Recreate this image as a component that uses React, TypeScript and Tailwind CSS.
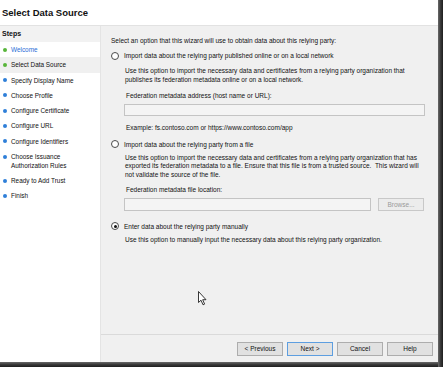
import React from "react"

const steps: { label: string[]; done?: boolean; link?: boolean; active?: boolean }[] = [
  { label: ["Welcome"], done: true, link: true },
  { label: ["Select Data Source"], done: true, active: true },
  { label: ["Specify Display Name"] },
  { label: ["Choose Profile"] },
  { label: ["Configure Certificate"] },
  { label: ["Configure URL"] },
  { label: ["Configure Identifiers"] },
  { label: ["Choose Issuance", "Authorization Rules"] },
  { label: ["Ready to Add Trust"] },
  { label: ["Finish"] },
]

function Radio({ checked }: { checked?: boolean }) {
  return (
    <span className="w-[8px] h-[8px] rounded-full border border-[#4a4a4a] bg-white flex items-center justify-center shrink-0">
      {checked && <span className="w-[3px] h-[3px] rounded-full bg-[#111]" />}
    </span>
  )
}

function Button({ children, primary }: { children: React.ReactNode; primary?: boolean }) {
  return (
    <div
      className={
        "w-[46px] h-[14px] flex items-center justify-center bg-[#e1e1e1] border text-[6.5px] text-[#111] " +
        (primary ? "border-[#5d9ee0]" : "border-[#adadad]")
      }
    >
      {children}
    </div>
  )
}

export default function App() {
  return (
    <div className="w-[443px] h-[367px] flex font-['Liberation_Sans',Arial,sans-serif] overflow-hidden">
      <div className="w-[438px] flex flex-col">
        {/* dialog */}
        <div className="h-[362px] flex flex-col bg-white relative">
          <div className="h-[26px] border-b border-[#e2e2e2] pl-[2px] pt-[8px]">
            <p className="text-[9.5px] leading-[10px] font-bold text-[#111]">Select Data Source</p>
          </div>

          <div className="flex flex-1">
            {/* steps sidebar */}
            <div className="w-[101px] border-r border-[#e4e4e4] bg-white">
              <div className="h-[16px] bg-[#f2f2f2] pl-[2px] flex items-center">
                <span className="text-[7px] font-bold text-[#111]">Steps</span>
              </div>
              {steps.map((s) => (
                <div
                  key={s.label[0]}
                  className={
                    "flex items-start pl-[3px] " +
                    (s.label.length > 1 ? "h-[24px] pt-[3px]" : "h-[15.3px] pt-[3px]") +
                    (s.active ? " bg-[#f0f0f0]" : "")
                  }
                >
                  <span
                    className={
                      "w-[4px] h-[4px] rounded-full mt-[2.5px] shrink-0 " +
                      (s.done ? "bg-[#58b53a]" : "bg-[#2f7fd8]")
                    }
                  />
                  <div className={"ml-[4px] text-[6.4px] leading-[9px] " + (s.link ? "text-[#2a6fd6]" : "text-[#111]")}>
                    {s.label.map((l) => (
                      <div key={l}>{l}</div>
                    ))}
                  </div>
                </div>
              ))}
            </div>

            {/* main panel */}
            <div className="flex-1 bg-[#f0f0f0] flex flex-col">
              <div className="flex-1 pl-[10px] pt-[10px] text-[6.5px] leading-[9px] text-[#111] whitespace-nowrap">
                <p>Select an option that this wizard will use to obtain data about this relying party:</p>

                <div className="mt-[6px] flex items-center gap-[5px] h-[9px]">
                  <Radio />
                  <span>Import data about the relying party published online or on a local network</span>
                </div>
                <div className="mt-[7px] pl-[14px] leading-[8.5px]">
                  <p>Use this option to import the necessary data and certificates from a relying party organization that</p>
                  <p>publishes its federation metadata online or on a local network.</p>
                </div>
                <div className="pl-[15px]">
                  <p className="mt-[7px]">Federation metadata address (host name or URL):</p>
                  <div className="mt-[4px] w-[301px] h-[12px] border border-[#c4c4c4] bg-[#f4f4f4] -ml-[2px]" />
                  <p className="mt-[6.5px]">Example: fs.contoso.com or https://www.contoso.com/app</p>
                </div>

                <div className="mt-[8px] flex items-center gap-[5px] h-[9px]">
                  <Radio />
                  <span>Import data about the relying party from a file</span>
                </div>
                <div className="mt-[5px] pl-[14px] leading-[8.5px]">
                  <p>Use this option to import the necessary data and certificates from a relying party organization that has</p>
                  <p>exported its federation metadata to a file. Ensure that this file is from a trusted source.&nbsp; This wizard will</p>
                  <p>not validate the source of the file.</p>
                </div>
                <div className="pl-[15px]">
                  <p className="mt-[6px]">Federation metadata file location:</p>
                  <div className="mt-[3.5px] flex gap-[7px] -ml-[2px]">
                    <div className="w-[247px] h-[13.5px] border border-[#c4c4c4] bg-[#f4f4f4]" />
                    <div className="w-[46px] h-[13.5px] border border-[#c8c8c8] bg-[#ececec] flex items-center justify-center text-[#9a9a9a]">
                      Browse...
                    </div>
                  </div>
                </div>

                <div className="mt-[10.5px] flex items-center gap-[5px] h-[9px]">
                  <Radio checked />
                  <span>Enter data about the relying party manually</span>
                </div>
                <p className="mt-[4.5px] pl-[14px]">
                  Use this option to manually input the necessary data about this relying party organization.
                </p>
              </div>

              {/* button bar */}
              <div className="h-[28px] border-t border-[#dadada] flex justify-end items-start pt-[7px] pr-[5px] gap-[4px]">
                <Button>&lt; Previous</Button>
                <Button primary>Next &gt;</Button>
                <Button>Cancel</Button>
                <Button>Help</Button>
              </div>
            </div>
          </div>

          {/* mouse pointer */}
          <svg className="absolute left-[198px] top-[291px]" width="9" height="15" viewBox="0 0 9 15">
            <path d="M0.5 0.5 L0.5 11.5 L3 9.2 L5 13.8 L6.6 13.1 L4.7 8.7 L8 8.7 Z" fill="#fff" stroke="#222" strokeWidth="0.9" strokeLinejoin="round" />
          </svg>
        </div>
        <div className="h-[5px] bg-gradient-to-b from-[#6a6a6a] via-[#3a3a3a] to-[#1e1e1e]" />
      </div>
      <div className="w-[5px] bg-gradient-to-r from-[#6a6a6a] via-[#3a3a3a] to-[#1e1e1e]" />
    </div>
  )
}
